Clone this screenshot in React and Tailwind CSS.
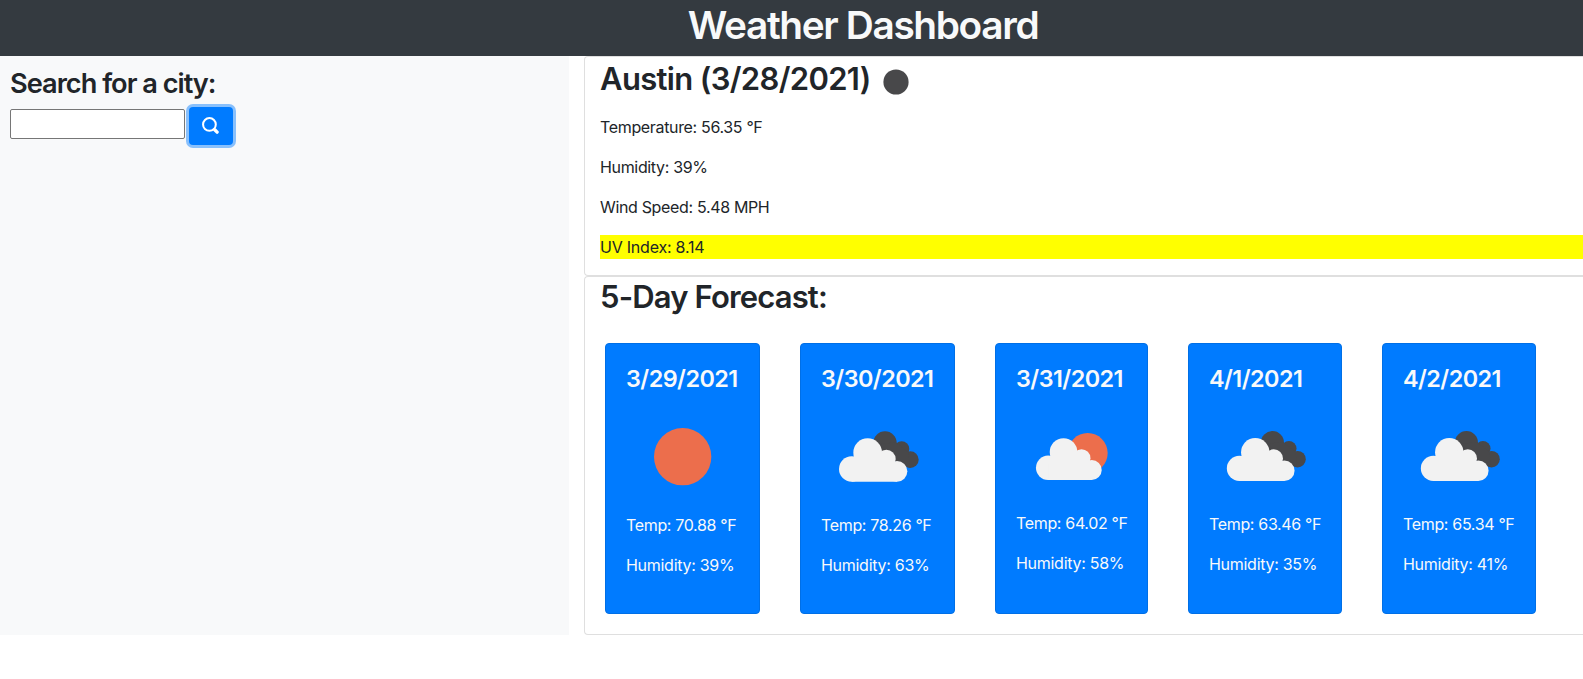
const CloudShape = () => (
  <>
    <circle cx="92" cy="204" r="38" />
    <circle cx="140" cy="155" r="43" />
    <circle cx="196" cy="174" r="28" />
    <circle cx="228" cy="211" r="31" />
    <path d="M92 242V190L110 150H165L205 175L228 190V242Z" />
  </>
);

function SunIcon() {
  return (
    <svg viewBox="0 0 339 339" className="block w-full">
      <circle cx="170" cy="167" r="86" fill="#ec6e4c" />
    </svg>
  );
}

function BrokenCloudsIcon() {
  return (
    <svg viewBox="0 0 339 339" className="block w-full">
      <g fill="#48484a">
        <circle cx="192" cy="126" r="35" />
        <circle cx="242" cy="144" r="23" />
        <circle cx="268" cy="176" r="25" />
        <path d="M175 130L224 124L262 154L266 200L230 190Z" />
      </g>
      <g fill="#f2f2f2"><CloudShape /></g>
    </svg>
  );
}

function FewCloudsIcon() {
  return (
    <svg viewBox="0 0 339 339" className="block w-full">
      <circle cx="219" cy="159" r="61" fill="#ec6e4c" />
      <g fill="#f2f2f2" transform="translate(8 4) scale(.98)"><CloudShape /></g>
    </svg>
  );
}

const days = [
  { date: "3/29/2021", Icon: SunIcon, temp: "70.88", humidity: 39, width: "w-[155px]" },
  { date: "3/30/2021", Icon: BrokenCloudsIcon, temp: "78.26", humidity: 63, width: "w-[155px]" },
  { date: "3/31/2021", Icon: FewCloudsIcon, temp: "64.02", humidity: 58, width: "w-[153px]" },
  { date: "4/1/2021", Icon: BrokenCloudsIcon, temp: "63.46", humidity: 35, width: "w-[154px]" },
  { date: "4/2/2021", Icon: BrokenCloudsIcon, temp: "65.34", humidity: 41, width: "w-[154px]" },
];

function DayCard({ date, Icon, temp, humidity, width }) {
  return (
    <article className={`${width} h-[271px] shrink-0 rounded border border-[#006fe6] bg-[#007bff] px-5 pt-5 whitespace-nowrap text-[#f8f9fa]`}>
      <h5 className="mb-2 text-[23.4px] leading-[29px] font-[560] tracking-[-0.55px]">{date}</h5>
      <Icon />
      <p className="-mt-px mb-4 leading-6 tracking-[-0.34px]">Temp: {temp} °F</p>
      <p className="leading-6 tracking-[-0.28px]">Humidity: {humidity}%</p>
    </article>
  );
}

export default function App() {
  return (
    <div className="h-[679px] w-full overflow-hidden bg-white font-['Inter',sans-serif] text-base text-[#212529]">
      <header className="flex h-14 justify-center bg-[#343a40] pl-[143px] text-[#f8f9fa]">
        <h1 className="text-[38.8px] leading-[49px] font-[560] tracking-[-1.35px] whitespace-nowrap">Weather Dashboard</h1>
      </header>
      <main className="flex h-[579px]">
        <aside className="w-[569px] shrink-0 bg-[#f8f9fa] pt-[10px] pl-[10px]">
          <h3 className="text-[27.2px] leading-[35px] font-[560] tracking-[-1px]">Search for a city:</h3>
          <div className="mt-[6px] flex gap-1">
            <input aria-label="City" className="mt-[2px] h-[30px] w-[175px] rounded-[2px] border border-[#767676] bg-white px-1" />
            <button aria-label="Search" className="flex h-[38px] w-[44px] items-center justify-center rounded bg-[#007bff] ring-3 ring-[#007bff]/45">
              <svg viewBox="0 0 16 16" className="mb-px mr-px h-[17px] w-[17px]" fill="none" stroke="#fff" strokeLinecap="round">
                <circle cx="7" cy="7" r="6" strokeWidth="1.9" />
                <path d="M12 12L14.2 14.2" strokeWidth="3.2" />
              </svg>
            </button>
          </div>
        </aside>
        <div className="ml-[15px] w-[1014px] shrink-0">
          <section className="h-[220px] rounded-l border border-r-0 border-[#dfdfdf] pl-[15px]">
            <div className="flex h-[58px] items-start">
              <h2 className="mt-[3px] w-[270px] text-[31px] leading-[38px] font-[560] tracking-[-0.66px] whitespace-nowrap">Austin (3/28/2021)</h2>
              <svg viewBox="0 0 26 26" className="mt-[12px] ml-[13px] h-[26px] w-[26px]">
                <circle cx="13" cy="13" r="12.6" fill="#48484a" />
              </svg>
            </div>
            <div className="flex flex-col gap-4 leading-6 tracking-[-0.34px]">
              <p>Temperature: 56.35 °F</p>
              <p>Humidity: 39%</p>
              <p>Wind Speed: 5.48 MPH</p>
              <p className="bg-[#ffff00] tracking-[-0.22px]">UV Index: 8.14</p>
            </div>
          </section>
          <section className="h-[359px] rounded-l border border-r-0 border-[#dfdfdf] pl-[15px]">
            <h2 className="pt-px text-[31px] leading-[38px] font-[560] tracking-[-0.85px]">5-Day Forecast:</h2>
            <div className="mt-[27px] ml-[5px] flex gap-10">
              {days.map((day) => (
                <DayCard key={day.date} {...day} />
              ))}
            </div>
          </section>
        </div>
      </main>
    </div>
  );
}
